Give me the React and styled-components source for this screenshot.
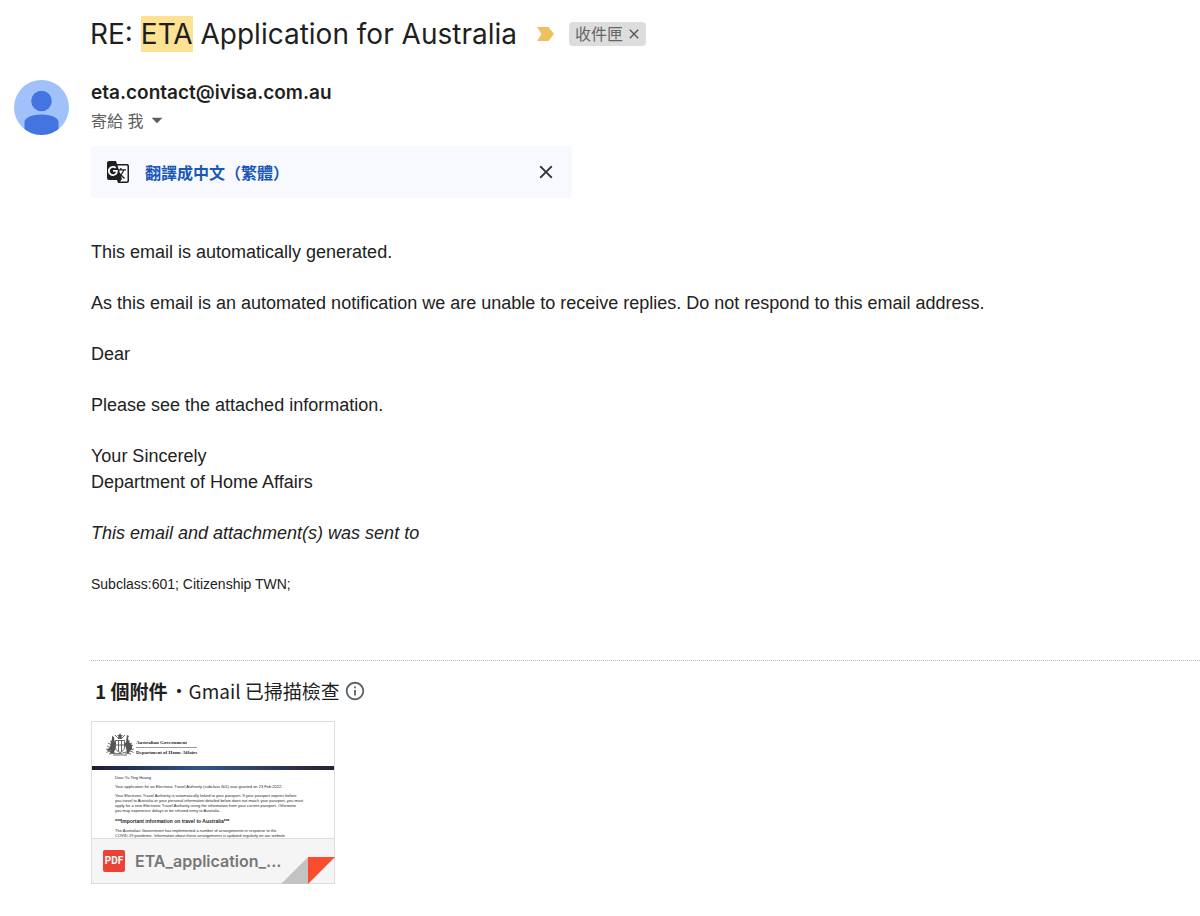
import React from "react";
import styled, { createGlobalStyle } from "styled-components";
import {
  MdArrowDropDown,
  MdClose,
  MdGTranslate,
  MdInfoOutline,
} from "react-icons/md";

const App = () => {
  return (
    <>
      <GlobalStyle />
      <Message>
        <SubjectRow>
          <Subject>
            RE: <Mark>ETA</Mark> Application for Australia
          </Subject>
          <ImportantButton type="button" aria-label="重要">
            <svg width="17" height="14" viewBox="0 0 17 14">
              <path d="M0 0h11.500L17 7l-5.500 7H0l4.500-7z" fill="#edc162" />
            </svg>
          </ImportantButton>
          <FolderTag>
            收件匣
            <TagButton type="button" aria-label="移除標籤">
              <MdClose size={16} />
            </TagButton>
          </FolderTag>
        </SubjectRow>

        <Columns>
          <Avatar viewBox="0 0 55 55" aria-hidden="true">
            <clipPath id="avatar-clip">
              <circle cx="27.5" cy="27.5" r="27.5" />
            </clipPath>
            <g clipPath="url(#avatar-clip)">
              <rect width="55" height="55" fill="#a1c1fb" />
              <circle cx="27.5" cy="21" r="10.3" fill="#4374e0" />
              <path
                d="M10.500 55V42c0-4.500 8-7.500 17-7.500s17 3 17 7.500v13z"
                fill="#4374e0"
              />
            </g>
          </Avatar>

          <Content>
            <Sender>eta.contact@ivisa.com.au</Sender>
            <RecipientButton type="button">
              寄給 我
              <MdArrowDropDown size={26} />
            </RecipientButton>

            <TranslateBar>
              <MdGTranslate size={24} color="#1f1f1f" />
              <TranslateLink href="#translate">翻譯成中文（繁體）</TranslateLink>
              <CloseButton type="button" aria-label="關閉">
                <MdClose size={22} />
              </CloseButton>
            </TranslateBar>

            <Body>
              <p>This email is automatically generated.</p>
              <p>
                As this email is an automated notification we are unable to
                receive replies. Do not respond to this email address.
              </p>
              <p>Dear</p>
              <p>Please see the attached information.</p>
              <p>
                Your Sincerely
                <br />
                Department of Home Affairs
              </p>
              <p>
                <em>This email and attachment(s) was sent to</em>
              </p>
              <Subclass>Subclass:601; Citizenship TWN;</Subclass>
            </Body>

            <Attachments>
              <AttachmentsTitle>
                <strong>1 個附件</strong>
                <Dot>•</Dot>
                <span>Gmail 已掃描檢查</span>
                <MdInfoOutline size={22} color="#5f6368" />
              </AttachmentsTitle>
              <AttachmentCard href="#attachment">
                <Preview>
                  <Letterhead>
                    <Crest />
                    <Department>
                      <div>Australian Government</div>
                      <div>Department of Home Affairs</div>
                    </Department>
                  </Letterhead>
                  <Stripe />
                  <Letter>
                    <p>Dear Yu Ting Huang</p>
                    <p>
                      Your application for an Electronic Travel Authority
                      (subclass 601) was granted on 23 Feb 2022.
                    </p>
                    <p>
                      Your Electronic Travel Authority is automatically linked
                      to your passport. If your passport expires before
                      <br />
                      you travel to Australia or your personal information
                      detailed below does not match your passport, you must
                      <br />
                      apply for a new Electronic Travel Authority using the
                      information from your current passport. Otherwise
                      <br />
                      you may experience delays or be refused entry to
                      Australia.
                    </p>
                    <h4>***Important information on travel to Australia***</h4>
                    <p>
                      The Australian Government has implemented a number of
                      arrangements in response to the
                      <br />
                      COVID-19 pandemic. Information about these arrangements is
                      updated regularly on our website
                    </p>
                  </Letter>
                </Preview>
                <CardFooter>
                  <PdfBadge>PDF</PdfBadge>
                  <FileName>ETA_application_...</FileName>
                </CardFooter>
                <Fold viewBox="0 0 54 28" aria-hidden="true">
                  <path d="M0 28L27 1v27z" fill="#c3c3c3" />
                  <path d="M27 28V1h27z" fill="#fb4c2f" />
                </Fold>
              </AttachmentCard>
            </Attachments>
          </Content>
        </Columns>
      </Message>
    </>
  );
};

const Crest = () => (
  <svg width="28" height="23" viewBox="0 0 28 23" aria-hidden="true">
    <g fill="none" stroke="#444" strokeWidth="0.8">
      <path d="M9.500 7.500h9v7c0 2.500-2.500 4-4.500 5-2-1-4.500-2.500-4.500-5z" />
      <path d="M9.500 12h9M12.500 7.500v11M15.500 7.500v11" />
      <path d="M0.500 19.500c4-3 6 2 13.500 1s9-4 13.500-1" />
      <path d="M2 16l5 4M3 21l6-1M26 15l-5 5M25 21l-6-1M7 22h14" />
      <path d="M1 13l4 2M27 12l-4 3M12 5l-3-3M16 5l3-3M0 16l4 1M28 16l-4 1" />
      <path d="M4 8l3 2M24 8l-3 2M2 10l4 2M26 10l-4 2" />
    </g>
    <path
      d="M6 3l2 1 .5 4 1.500 2-1 2 .5 4-2 4H4l1-3-3 1-1-1 3-3 1-5 1-3zM21 2l2 1-1 2 1 4 3 3v4l-2 1-1 3h-2l-1-5-1.500-4 1.500-2zM14 0l1 2 2 .2-1.500 1.300L16 6h-4l.5-2.500L11 2.200l2-.2z"
      fill="#555"
    />
  </svg>
);

export default App;

const GlobalStyle = createGlobalStyle`
  *, *::before, *::after {
    box-sizing: border-box;
  }

  body {
    margin: 0;
    background: #fff;
    color: #1f1f1f;
    font-family: Inter, "Noto Sans CJK TC", sans-serif;
  }

  button {
    padding: 0;
    border: 0;
    background: none;
    color: inherit;
    font: inherit;
    cursor: pointer;
  }

  h1, h2, h4, p {
    margin: 0;
  }

  svg {
    display: block;
    flex: none;
  }
`;

const Message = styled.main`
  padding: 16px 0 32px;
`;

const SubjectRow = styled.header`
  display: flex;
  align-items: center;
  height: 36px;
  padding-left: 90px;
`;

const Subject = styled.h1`
  font: 400 28px/36px Inter, sans-serif;
  white-space: nowrap;
`;

const Mark = styled.mark`
  display: inline-block;
  background: #fde293;
  color: inherit;
`;

const ImportantButton = styled.button`
  margin-left: 20px;
`;

const FolderTag = styled.span`
  display: flex;
  align-items: center;
  gap: 3px;
  height: 24px;
  margin-left: 15px;
  padding: 0 4px 0 6px;
  border-radius: 4px;
  background: #dddddd;
  color: #666;
  font-size: 16px;
  line-height: 24px;
`;

const TagButton = styled.button`
  color: #555;
`;

const Columns = styled.div`
  display: grid;
  grid-template-columns: 55px minmax(0, 1fr);
  column-gap: 22px;
  padding: 28px 0 0 14px;
`;

const Avatar = styled.svg`
  width: 55px;
  height: 55px;
`;

const Content = styled.div`
  min-width: 0;
`;

const Sender = styled.h2`
  font: 600 19px/26px Inter, sans-serif;
`;

const RecipientButton = styled.button`
  display: flex;
  align-items: center;
  height: 28px;
  color: #5e5e5e;
  font-size: 16px;
`;

const TranslateBar = styled.div`
  display: flex;
  align-items: center;
  gap: 15px;
  max-width: 481px;
  height: 52px;
  margin-top: 12px;
  padding: 0 15px;
  border-radius: 4px;
  background: #f8f9fe;
`;

const TranslateLink = styled.a`
  flex: 1;
  color: #1a58b8;
  font-size: 16px;
  font-weight: 700;
  text-decoration: none;
`;

const CloseButton = styled.button`
  color: #333;
`;

const Body = styled.div`
  display: flex;
  flex-direction: column;
  gap: 25px;
  padding: 41px 0 63px;
  color: #222;
  font: 18px/26px "Liberation Sans", sans-serif;
`;

const Subclass = styled.p`
  font-size: 14px;
`;

const Attachments = styled.section`
  border-top: 1px dotted #bbb;
`;

const AttachmentsTitle = styled.div`
  display: flex;
  align-items: center;
  height: 60px;
  padding-left: 4px;
  font-family: "Noto Sans CJK TC", sans-serif;
  font-size: 19px;
  line-height: 24px;

  svg {
    margin-left: 4px;
  }
`;

const Dot = styled.span`
  margin-left: 2px;
`;

const AttachmentCard = styled.a`
  display: block;
  position: relative;
  width: 244px;
  border: 1px solid #ddd;
  color: inherit;
  text-decoration: none;
`;

const Preview = styled.div`
  height: 116px;
  overflow: hidden;
`;

const Letterhead = styled.div`
  display: flex;
  align-items: center;
  gap: 2px;
  height: 44px;
  padding-left: 14px;
`;

const Department = styled.div`
  padding-top: 6px;
  font: 700 5px/9px "Liberation Serif", serif;

  div + div {
    border-top: 1px solid #999;
  }
`;

const Stripe = styled.div`
  height: 4px;
  background: linear-gradient(90deg, #1d1b35, #33568f 45%, #2b2030);
`;

const Letter = styled.div`
  display: flex;
  flex-direction: column;
  gap: 4px;
  padding: 5px 0 0 23px;
  font: 4px/5px "Liberation Sans", sans-serif;
  white-space: nowrap;

  h4 {
    padding-top: 2px;
    font-size: 5px;
  }
`;

const CardFooter = styled.div`
  display: flex;
  align-items: center;
  gap: 10px;
  height: 45px;
  padding-left: 11px;
  border-top: 1px solid #ddd;
  background: #f5f5f5;
`;

const PdfBadge = styled.span`
  width: 22px;
  border-radius: 2px;
  background: #ea4335;
  color: #fff;
  font: 700 10px/22px Roboto, sans-serif;
  text-align: center;
`;

const FileName = styled.span`
  color: #777;
  font: 600 16px/24px Inter, sans-serif;
`;

/* folded corner drawn over the card's bottom right edge */
const Fold = styled.svg`
  position: absolute;
  right: -1px;
  bottom: -1px;
  width: 54px;
  height: 28px;
`;
